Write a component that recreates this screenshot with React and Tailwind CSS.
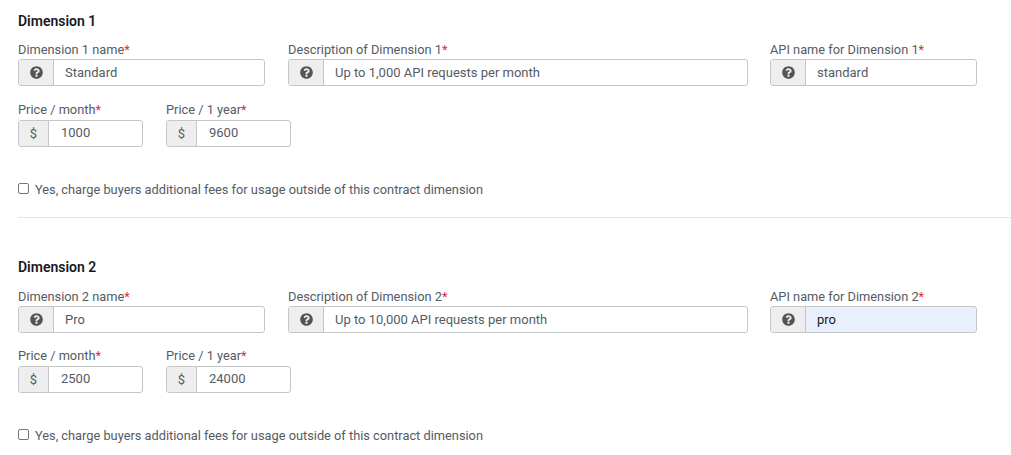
import { FaQuestionCircle } from "react-icons/fa";

const Label = ({ children }) => (
  <div className="text-[12.8px] leading-[16px] h-[16px] text-[#545b64] whitespace-nowrap">
    {children}
    <span className="text-[#df2a3a]">*</span>
  </div>
);

const HelpInput = ({ label, value, width, filled }) => (
  <div className={width}>
    <Label>{label}</Label>
    <div className={`mt-[1px] flex h-[27px] rounded-[3px] border border-[#c4c6c8] overflow-hidden ${filled ? "bg-[#e8f0fe]" : "bg-white"}`}>
      <div className="w-[35px] shrink-0 flex items-center justify-center bg-[#eeeeee] border-r border-[#c4c6c8] text-[#545454]">
        <FaQuestionCircle size={13} />
      </div>
      <div className={`pl-[11px] flex items-center text-[13px] ${filled ? "text-[#16191f]" : "text-[#545b64]"}`}>{value}</div>
    </div>
  </div>
);

const PriceInput = ({ label, value }) => (
  <div className="w-[125px]">
    <Label>{label}</Label>
    <div className="mt-[2px] flex h-[27px] rounded-[3px] border border-[#c4c6c8] overflow-hidden bg-white">
      <div className="w-[30px] shrink-0 flex items-center justify-center bg-[#eeeeee] border-r border-[#c4c6c8] text-[13px] text-[#545b64]">$</div>
      <div className="pl-[12px] pb-[2px] flex items-center text-[13px] text-[#545b64]">{value}</div>
    </div>
  </div>
);

const Dimension = ({ n, name, desc, api, month, year, filled, rowClass, priceClass }) => (
  <section>
    <h2 className="text-[14px] leading-[16px] font-semibold text-[#16191f]">Dimension {n}</h2>
    <div className={`flex ${rowClass}`}>
      <HelpInput label={`Dimension ${n} name`} value={name} width="w-[247px] mr-[23px]" />
      <HelpInput label={`Description of Dimension ${n}`} value={desc} width="w-[460px] mr-[22px]" />
      <HelpInput label={`API name for Dimension ${n}`} value={api} width="w-[207px]" filled={filled} />
    </div>
    <div className={`flex gap-[23px] ${priceClass}`}>
      <PriceInput label="Price / month" value={month} />
      <PriceInput label="Price / 1 year" value={year} />
    </div>
    <label className="mt-[35px] flex items-start gap-[6px] text-[12.8px] leading-[16px] text-[#545b64]">
      <span className="mt-[1px] w-[11px] h-[11px] rounded-[2px] border border-[#767676] bg-white" />
      Yes, charge buyers additional fees for usage outside of this contract dimension
    </label>
  </section>
);

export default function App() {
  return (
    <div className="w-[1011px] h-[455px] overflow-hidden bg-white pl-[18px] pt-[13px] font-['Roboto',sans-serif]">
      <Dimension n={1} name="Standard" desc="Up to 1,000 API requests per month" api="standard" month="1000" year="9600" rowClass="mt-[13px]" priceClass="mt-[16px]" />
      <hr className="mt-[19px] mb-[41px] border-[#e5e7e8]" />
      <Dimension n={2} name="Pro" desc="Up to 10,000 API requests per month" api="pro" month="2500" year="24000" filled rowClass="mt-[14px]" priceClass="mt-[15px]" />
    </div>
  );
}
